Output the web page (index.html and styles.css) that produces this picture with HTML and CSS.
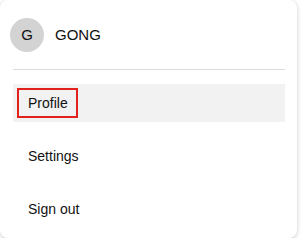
FILE: index.html
```html
<!DOCTYPE html>
<html>
<head>
<title>Account menu</title>
<link rel="stylesheet" href="styles.css">
</head>
<body>

<div class="menu">
  <div class="header">
    <div class="avatar">G</div>
    <div class="name">GONG</div>
  </div>
  <div class="divider"></div>
  <div class="items">
    <div class="item active"><span class="label focused">Profile</span></div>
    <div class="item"><span class="label">Settings</span></div>
    <div class="item"><span class="label">Sign out</span></div>
  </div>
</div>

</body>
</html>
```

FILE: styles.css
```css
body {
  margin: 0;
  background-color: white;
  font-family: "Liberation Sans", Arial, sans-serif;
  color: #111;
}

.menu {
  width: 297px;
  height: 238px;
  background-color: white;
  border-radius: 8px;
  box-shadow: 0 1px 4px rgba(0, 0, 0, 0.22);
  box-sizing: border-box;
}

.header {
  display: flex;
  align-items: center;
  gap: 11px;
  padding: 17px 0 0 10px;
  height: 52px;
  box-sizing: border-box;
}

.avatar {
  width: 34px;
  height: 34px;
  border-radius: 50%;
  background-color: #d3d3d3;
  display: flex;
  align-items: center;
  justify-content: center;
  font-size: 15px;
}

.name {
  font-size: 15px;
}

.divider {
  height: 1px;
  background-color: #dcdcdc;
  margin: 17px 12px 0 13px;
}

.items {
  display: flex;
  flex-direction: column;
  gap: 15px;
  margin: 14px 12px 0 13px;
}

.item {
  height: 38px;
  padding: 4px;
  box-sizing: border-box;
  font-size: 14px;
}

.item.active {
  background-color: #f2f2f2;
}

.label {
  display: inline-block;
  padding: 4px 8px 4px 9px;
  line-height: 18px;
  border: 2px solid transparent;
}

.label.focused {
  border-color: #e3211c;
}
```
